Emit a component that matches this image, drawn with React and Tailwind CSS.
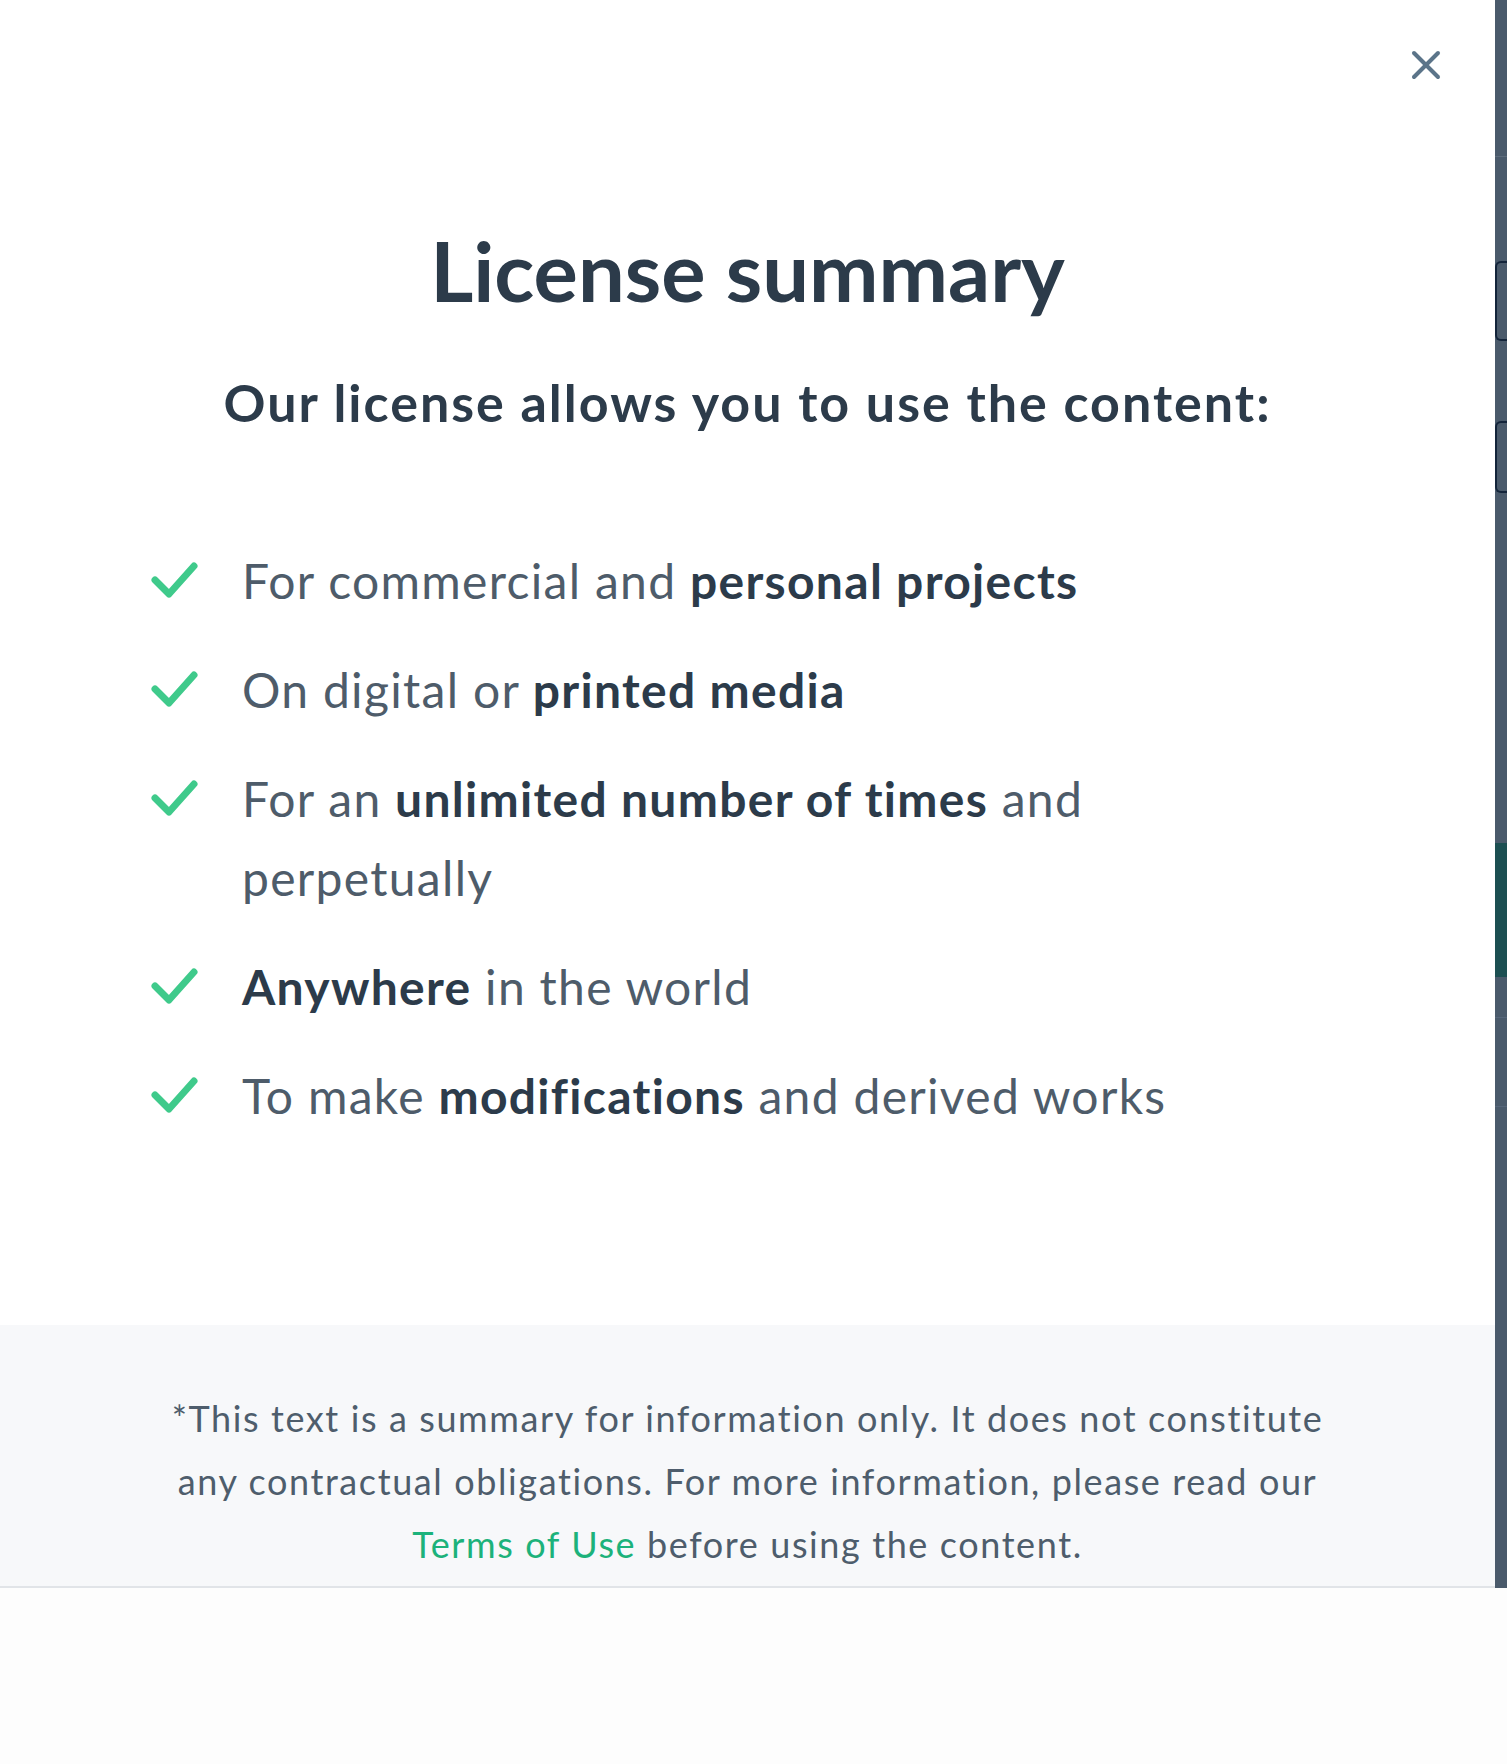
import { X } from 'lucide-react';

const items = [
  [['For commercial and ', false], ['personal projects', true]],
  [['On digital or ', false], ['printed media', true]],
  [['For an ', false], ['unlimited number of times', true], [' and perpetually', false]],
  [['Anywhere', true], [' in the world', false]],
  [['To make ', false], ['modifications', true], [' and derived works', false]],
];

const Check = () => (
  <svg viewBox="0 0 48 40" className="w-[48px] h-[40px] shrink-0 mt-[19px]" fill="none">
    <path d="M5 20 L19 34 L44 6" stroke="#3fca8b" strokeWidth="7" strokeLinecap="round" strokeLinejoin="round" />
  </svg>
);

function SideStrip() {
  // sliver of the page behind the modal
  return (
    <div className="w-[12px] bg-[#4a5a6b] flex flex-col">
      <div className="h-[157px] border-b border-[#5d6c7c]" />
      <div className="mt-[104px] h-[80px] border-l-2 border-y-2 border-[#13243a] rounded-l-[6px]" />
      <div className="mt-[80px] h-[72px] border-l-2 border-y-2 border-[#13243a] rounded-l-[6px]" />
      <div className="mt-[350px] h-[134px] bg-[#1c4f52]" />
      <div className="mt-[40px] h-[90px] border-y border-[#56667a]" />
    </div>
  );
}

export default function App() {
  return (
    <div className="w-[1507px] h-[1764px] bg-[#fdfdfd] flex flex-col" style={{ fontFamily: 'Lato, "Open Sans", sans-serif' }}>
      <div className="flex h-[1588px]">
        <div className="relative flex-1 bg-white flex flex-col border-b-2 border-[#e1e4e8]">
          <button className="absolute top-[41px] right-[45px] text-[#5b7489]">
            <X className="w-[48px] h-[48px]" strokeWidth={2} />
          </button>

          <h1 className="mt-[220px] text-center text-[83px] leading-[100px] font-bold text-[#2c3b4a]">
            License summary
          </h1>
          <p className="mt-[50px] text-center text-[52px] leading-[64px] font-bold tracking-[2px] text-[#2c3b4a]">
            Our license allows you to use the content:
          </p>

          <ul className="mt-[107px] ml-[150px] flex flex-col gap-[30px]">
            {items.map((parts, i) => (
              <li key={i} className="flex gap-[44px]">
                <Check />
                <span className="w-[1000px] text-[48px] leading-[79px] tracking-[1.3px] text-[#4e5c6a]">
                  {parts.map(([t, b], j) =>
                    b ? <b key={j} className="font-bold text-[#2c3b4a]">{t}</b> : <span key={j}>{t}</span>
                  )}
                </span>
              </li>
            ))}
          </ul>

          <div className="mt-auto h-[261px] bg-[#f7f8fa] flex flex-col items-center pt-[62px]">
            <p className="text-center text-[36px] leading-[63px] tracking-[1.6px] text-[#4e5d6c]">
              *This text is a summary for information only. It does not constitute
              <br />
              any contractual obligations. For more information, please read our
              <br />
              <a className="text-[#1cb27b]">Terms of Use</a> before using the content.
            </p>
          </div>
        </div>
        <SideStrip />
      </div>
    </div>
  );
}
